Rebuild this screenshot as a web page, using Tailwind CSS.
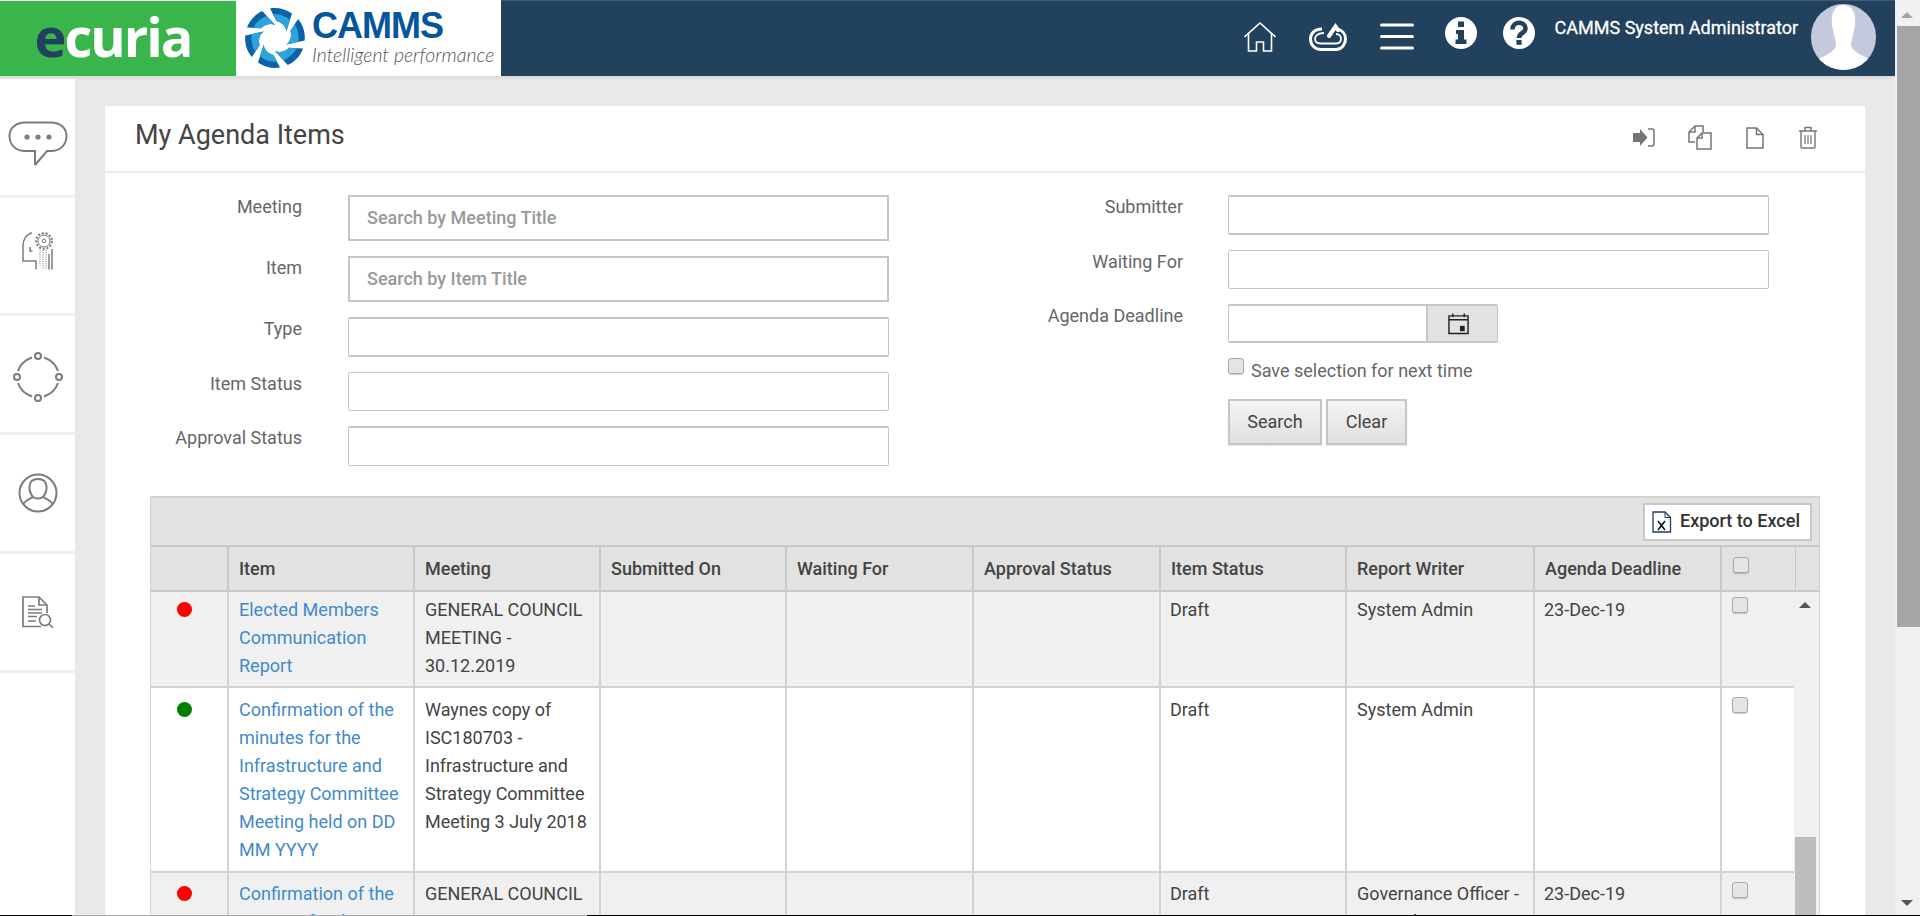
<!DOCTYPE html>
<html>
<head>
<meta charset="utf-8">
<title>My Agenda Items</title>
<script src="https://cdn.jsdelivr.net/npm/@tailwindcss/browser@4"></script>
</head>
<body class="relative h-[916px] w-[1920px] overflow-hidden bg-[#e9e9e9] font-['Roboto',sans-serif] text-[18px] text-[#555]">
<div class="flex h-[916px]">
  <div class="flex w-[1895px] flex-col">
    <!-- Header -->
    <header class="flex h-[76px] shrink-0 items-stretch bg-[#22415c] shadow-[0_2px_4px_rgba(0,0,0,0.08)]">
      <div class="flex h-[76px] w-[236px] items-center justify-center border-t border-white bg-[#3ab54c] pr-[10px] pb-[6px]">
        <span class="font-['Open_Sans',sans-serif] text-[54px] leading-none font-bold tracking-[-2px] text-white"><span class="text-[#22415c]">e</span>curia</span>
      </div>
      <div class="flex w-[265px] items-center bg-white pl-[8px]">
        <svg width="62" height="62" viewBox="-31 -31 62 62" class="shrink-0">
          <g><path fill="#0c62a6" d="M-5 -29.500 C2 -31 11 -29 17 -24.500 L11.300 -6.500 C11 -11 8 -15 1.500 -17 Z"/><path fill="#2ea3dc" d="M-2 -24 C6 -24 12 -21 15 -18 L11.300 -6.500 C11 -11 8 -15 1.500 -17 Z"/></g>
          <g transform="rotate(60)"><path fill="#0c62a6" d="M-5 -29.500 C2 -31 11 -29 17 -24.500 L11.300 -6.500 C11 -11 8 -15 1.500 -17 Z"/><path fill="#2ea3dc" d="M-2 -24 C6 -24 12 -21 15 -18 L11.300 -6.500 C11 -11 8 -15 1.500 -17 Z"/></g>
          <g transform="rotate(120)"><path fill="#0c62a6" d="M-5 -29.500 C2 -31 11 -29 17 -24.500 L11.300 -6.500 C11 -11 8 -15 1.500 -17 Z"/><path fill="#2ea3dc" d="M-2 -24 C6 -24 12 -21 15 -18 L11.300 -6.500 C11 -11 8 -15 1.500 -17 Z"/></g>
          <g transform="rotate(180)"><path fill="#0c62a6" d="M-5 -29.500 C2 -31 11 -29 17 -24.500 L11.300 -6.500 C11 -11 8 -15 1.500 -17 Z"/><path fill="#2ea3dc" d="M-2 -24 C6 -24 12 -21 15 -18 L11.300 -6.500 C11 -11 8 -15 1.500 -17 Z"/></g>
          <g transform="rotate(240)"><path fill="#0c62a6" d="M-5 -29.500 C2 -31 11 -29 17 -24.500 L11.300 -6.500 C11 -11 8 -15 1.500 -17 Z"/><path fill="#2ea3dc" d="M-2 -24 C6 -24 12 -21 15 -18 L11.300 -6.500 C11 -11 8 -15 1.500 -17 Z"/></g>
          <g transform="rotate(300)"><path fill="#0c62a6" d="M-5 -29.500 C2 -31 11 -29 17 -24.500 L11.300 -6.500 C11 -11 8 -15 1.500 -17 Z"/><path fill="#2ea3dc" d="M-2 -24 C6 -24 12 -21 15 -18 L11.300 -6.500 C11 -11 8 -15 1.500 -17 Z"/></g>
        </svg>
        <div class="ml-[6px] flex flex-col">
          <span class="font-['Liberation_Sans',sans-serif] text-[36px] leading-[30px] font-bold tracking-[-1px] text-[#04559c]">CAMMS</span>
          <span class="mt-[4px] font-['Lato',sans-serif] text-[19.5px] leading-[20px] font-light whitespace-nowrap text-[#555] italic">Intelligent performance</span>
        </div>
      </div>
      <div class="flex flex-1 items-start justify-end border-t border-[#3f5a72]">
        <div class="flex items-start">
          <svg width="32" height="30" viewBox="0 0 32 30" fill="none" stroke="white" stroke-width="1.600" class="mt-[21px] mr-[33px]"><path d="M0.500 15 L16 1 L31.500 15"/><path d="M4.500 12 V29 H12.500 V20 H19.500 V29 H27.500 V12"/></svg>
          <svg width="38" height="28" viewBox="0 0 38 28" fill="none" stroke="white" class="mt-[22px] mr-[33px]"><path stroke-width="3" d="M13 6 C5 6 1.500 11 1.500 16 C1.500 22 6 26.500 12 26.500 H27 C33 26.500 36.500 21 36.500 16 C36.500 10.500 33 7 28.500 6.500"/><path stroke-width="1.800" d="M15 10 C9 10 6 12.500 6 16 C6 19.500 9 20.500 12 20.500 H27 C30 20.500 32 18.500 32 15.500 C32 13 30 11 27 11"/><path stroke-width="4" stroke-linecap="round" d="M20 13 L26.500 3.500 L29 7"/></svg>
          <svg width="34" height="27" viewBox="0 0 34 27" fill="none" stroke="white" stroke-width="3.200" stroke-linecap="round" class="mt-[22px] mr-[31px]"><path d="M1.600 2 H32.400 M1.600 13.500 H32.400 M1.600 25 H32.400"/></svg>
          <svg width="32" height="32" viewBox="0 0 32 32" class="mt-[16px] mr-[26px]"><circle cx="16" cy="16" r="16" fill="white"/><path fill="#22415c" d="M13 4.500 H19 V10 H13 Z M11 13 H19 V22.500 H21.500 V27 H10.500 V22.500 H13 V17 H11 Z"/></svg>
          <svg width="32" height="32" viewBox="0 0 32 32" class="mt-[16px] mr-[20px]"><circle cx="16" cy="16" r="16" fill="white"/><path fill="none" stroke="#22415c" stroke-width="4.600" d="M9.500 12.500 C9.500 3.500 22.500 4 22.500 11.500 C22.500 16 16 16 16 21"/><rect x="13.400" y="23" width="5.200" height="4.800" fill="#22415c"/></svg>
        </div>
        <span class="mt-[16px] mr-[13px] text-[18px] leading-[22px] font-normal whitespace-nowrap text-white [-webkit-text-stroke:0.3px_white]">CAMMS System Administrator</span>
        <div class="mt-[3px] mr-[19px] h-[66px] w-[65px] shrink-0 overflow-hidden rounded-full bg-[#c4c9de]">
          <svg viewBox="0 0 65 66" class="h-full w-full"><path fill="white" d="M32 1 C42 1 45 10 44 20 C43 30 40 35 40 42 C43 49 54 52 62 58 C52 65 43 66 32 66 C22 66 12 65 3 58 C11 52 23 49 25 42 C25 35 22 30 21 20 C20 10 23 1 32 1 Z"/></svg>
        </div>
      </div>
    </header>
    <div class="flex min-h-0 flex-1 pt-[3px]">
      <!-- Sidebar -->
      <aside class="flex w-[75px] shrink-0 flex-col bg-white">
        <div class="flex h-[119px] items-center justify-center border-b-[3px] border-[#eef1f0] pt-[14px]">
          <svg width="60" height="46" viewBox="0 0 60 46" fill="none" stroke="#7c7c7c" stroke-width="2"><path d="M17 1.500 H43 C52 1.500 58.500 7 58.500 15 C58.500 24 52 30 43 30 H39 L28 43 C27 44 27 43.500 27 43 L27 30 H17 C8 30 1.500 24 1.500 15 C1.500 7 8 1.500 17 1.500 Z"/><circle cx="19" cy="16" r="2.600" fill="#7c7c7c" stroke="none"/><circle cx="30" cy="16" r="2.600" fill="#7c7c7c" stroke="none"/><circle cx="41" cy="16" r="2.600" fill="#7c7c7c" stroke="none"/></svg>
        </div>
        <div class="flex h-[118px] items-center justify-center border-b-[3px] border-[#eef1f0] pb-[9px]">
          <svg width="31" height="38" viewBox="0 0 31 38" fill="none" stroke="#7c7c7c" stroke-width="1.500"><path d="M10 1 C4 2 1 8 1 14 V29 H14 V37.500"/><path d="M8 15 V19 H10.500"/><circle cx="22" cy="9" r="7.800" stroke-width="2" stroke-dasharray="2.200 1.600"/><circle cx="22" cy="9" r="6" stroke-width="1"/><circle cx="22" cy="9" r="1.800" stroke-width="1"/><path d="M18 18 V34 M21 18 V37.500 M24 18 V37.500" stroke-dasharray="1 1.200" stroke-width="1"/><path d="M27 22 V37.500 M30 17 V37.500"/></svg>
        </div>
        <div class="flex h-[119px] items-center justify-center border-b-[3px] border-[#eef1f0] pt-[6px]">
          <svg width="50" height="50" viewBox="0 0 50 50" fill="none" stroke="#7c7c7c" stroke-width="2"><circle cx="25" cy="4" r="3"/><circle cx="4" cy="25" r="3"/><circle cx="46" cy="25" r="3"/><circle cx="25" cy="46" r="3"/><path d="M19 5.500 C12 8 7 13 5 19 M31 5.500 C38 8 43 13 45 19 M5 31 C7 37 12 42 19 44.500 M45 31 C43 37 38 42 31 44.500"/></svg>
        </div>
        <div class="flex h-[119px] items-center justify-center border-b-[3px] border-[#eef1f0]">
          <svg width="40" height="40" viewBox="0 0 40 40" fill="none" stroke="#7c7c7c" stroke-width="2"><circle cx="20" cy="20" r="18.500"/><path d="M5 31 C8 27 11 26 15 24 C12 20 11 17 11.500 13 C12 8 15.500 6 20 6 C24.500 6 28 8 28.500 13 C29 17 28 20 25 24 C29 26 32 27 35 31"/><path d="M15 24 C17.500 26 22.500 26 25 24"/></svg>
        </div>
        <div class="flex h-[119px] items-center justify-center border-b-[3px] border-[#eef1f0]">
          <svg width="32" height="32" viewBox="0 0 32 32" fill="none" stroke="#7c7c7c" stroke-width="1.700"><path d="M19 30.500 H1 V1 H17 L25 9 V17"/><path d="M17 1 V9 H25"/><path d="M6 10 H13 M6 13.500 H20 M6 17 H20 M6 20.500 H15 M6 25 H14"/><circle cx="23" cy="24" r="5.500" fill="white"/><path d="M27 28 L31 32"/></svg>
        </div>
      </aside>
      <!-- Main -->
      <main class="min-w-0 flex-1 pt-[27px] pl-[30px]">
        <div class="h-full w-[1760px] bg-white">
          <div class="flex h-[67px] items-center justify-between border-b-[2px] border-[#ececec] pr-[47px] pl-[30px]">
            <h1 class="mt-[-8px] text-[27px] leading-[30px] font-normal text-[#444]">My Agenda Items</h1>
            <div class="mb-[2px] flex items-center">
              <svg width="22" height="19" viewBox="0 0 22 19" class="mr-[33px]"><path fill="#757575" d="M0 5 H7 V1 L14.500 9.500 L7 18 V14 H0 Z"/><path fill="none" stroke="#757575" stroke-width="1.500" d="M15 1 H19 Q21 1 21 3.500 V15.500 Q21 18 19 18 H15"/></svg>
              <svg width="24" height="25" viewBox="0 0 24 25" fill="none" stroke="#757575" stroke-width="1.500" class="mr-[34px]"><path d="M7 17 H1 V7 L7 1 H15 V7"/><path d="M1 7 H7 V1"/><path d="M23 24 H9 V13 L14 8 H23 Z"/><path d="M9 13 H14 V8"/></svg>
              <svg width="18" height="22" viewBox="0 0 18 22" fill="none" stroke="#757575" stroke-width="1.500" class="mr-[34px]"><path d="M1 1 H10.500 L17 7.500 V21 H1 Z"/><path d="M10.500 1 V7.500 H17"/></svg>
              <svg width="20" height="23" viewBox="0 0 20 23" fill="none" stroke="#757575" stroke-width="1.400"><path d="M1 5 H19 M7 5 V1.500 H13 V5 M3 5 V21 Q3 22 4 22 H16 Q17 22 17 21 V5"/><path d="M7 9 V18 M10 9 V18 M13 9 V18" stroke-width="1.200"/></svg>
            </div>
          </div>
          <!-- Search form -->
          <div class="flex h-[323px] items-start pt-[22px]">
            <div class="flex w-[784px] flex-col">
              <div class="flex h-[61px] items-start"><label class="w-[197px] text-right leading-[24px] text-[#666]">Meeting</label><input placeholder="Search by Meeting Title" class="ml-[46px] h-[46px] w-[541px] border-[2px] border-[#c6c6c6] bg-white px-[17px] pb-[1px] text-[18px] font-medium placeholder:text-[#999]"></div>
              <div class="flex h-[61px] items-start"><label class="w-[197px] text-right leading-[24px] text-[#666]">Item</label><input placeholder="Search by Item Title" class="ml-[46px] h-[46px] w-[541px] border-[2px] border-[#c6c6c6] bg-white px-[17px] pb-[1px] text-[18px] font-medium placeholder:text-[#999]"></div>
              <div class="flex h-[55px] items-start"><label class="w-[197px] text-right leading-[24px] text-[#666]">Type</label><div class="ml-[46px] h-[40px] w-[541px] rounded-[2px] border border-t-[2px] border-b-[2px] border-[#c6c6c6] bg-white"></div></div>
              <div class="flex h-[54px] items-start"><label class="w-[197px] text-right leading-[24px] text-[#666]">Item Status</label><div class="ml-[46px] h-[39px] w-[541px] rounded-[2px] border border-[#c6c6c6] bg-white"></div></div>
              <div class="flex h-[40px] items-start"><label class="w-[197px] text-right leading-[24px] text-[#666]">Approval Status</label><div class="ml-[46px] h-[40px] w-[541px] rounded-[2px] border border-t-[2px] border-[#c6c6c6] bg-white"></div></div>
            </div>
            <div class="flex flex-1 flex-col">
              <div class="flex h-[55px] items-start"><label class="w-[294px] text-right leading-[24px] text-[#666]">Submitter</label><div class="ml-[45px] h-[40px] w-[541px] rounded-[2px] border border-t-[2px] border-b-[2px] border-[#c6c6c6] bg-white"></div></div>
              <div class="flex h-[54px] items-start"><label class="w-[294px] text-right leading-[24px] text-[#666]">Waiting For</label><div class="ml-[45px] h-[39px] w-[541px] rounded-[2px] border border-[#c6c6c6] bg-white"></div></div>
              <div class="flex h-[54px] items-start"><label class="w-[294px] text-right leading-[24px] text-[#666]">Agenda Deadline</label>
                <div class="ml-[45px] flex h-[39px] w-[270px] rounded-[2px] border border-t-[2px] border-b-[2px] border-[#c6c6c6]">
                  <div class="w-[197px] bg-white"></div>
                  <div class="flex flex-1 items-center justify-center border-l-[2px] border-[#c6c6c6] bg-[#e2e2e2] pr-[8px]">
                    <svg width="21" height="23" viewBox="0 0 22 23" fill="none" stroke="#222" stroke-width="1.500"><path d="M1 3.500 H21 V22 H1 Z M1 7.500 H21"/><path d="M5 1 V5 M17 1 V5"/><rect x="12.500" y="14" width="5" height="5.500" fill="#222" stroke="none"/></svg>
                  </div>
                </div>
              </div>
              <div class="flex items-start pl-[339px]">
                <span class="h-[16px] w-[16px] rounded-[3px] border border-[#aaa] bg-[#e4e4e4] shadow-[0_1px_1px_rgba(0,0,0,0.2)]"></span>
                <span class="ml-[7px] leading-[26px] text-[#666]">Save selection for next time</span>
              </div>
              <div class="mt-[15px] flex pl-[339px]">
                <button class="h-[46px] w-[94px] border-[2px] border-[#c6c6c6] bg-linear-to-b from-[#f4f4f4] to-[#e0e0e0] pb-[2px] text-[18px] font-normal text-[#444] shadow-[0_1px_1px_rgba(0,0,0,0.1)]">Search</button>
                <button class="ml-[4px] h-[46px] w-[81px] border-[2px] border-[#c6c6c6] bg-linear-to-b from-[#f4f4f4] to-[#e0e0e0] pb-[2px] text-[18px] font-normal text-[#444] shadow-[0_1px_1px_rgba(0,0,0,0.1)]">Clear</button>
              </div>
            </div>
          </div>
          <!-- Table -->
          <div class="ml-[45px] w-[1670px] border-x-[1px] border-t-[2px] border-[#d2d2d2] leading-[28px]">
            <div class="flex h-[49px] items-center justify-end border-b-[2px] border-[#c8c8c8] bg-[#e2e2e2] pr-[7px]">
              <div class="flex h-[38px] w-[169px] items-center border-[2px] border-[#c8c8c8] bg-white pl-[7px]">
                <svg width="20" height="22" viewBox="0 0 20 22" fill="none" class="shrink-0"><path d="M1 1 H13 L18.500 6.500 V21 H1 Z" stroke="#1f3a66" stroke-width="1.300"/><path d="M13 1 V6.500 H18.500" stroke="#1f3a66" stroke-width="1"/><path d="M6 10 L13 19 M13 10 L6 19" stroke="#111" stroke-width="1.600"/></svg>
                <span class="ml-[8px] pb-[2px] text-[18px] font-medium whitespace-nowrap text-[#333]">Export to Excel</span>
              </div>
            </div>
            <div class="grid h-[45px] grid-cols-[76px_186px_186px_186px_187px_187px_186px_188px_187px_75px_1fr] border-b-[2px] border-[#c8c8c8] bg-[#e2e2e2] font-medium text-[#444]">
              <div></div>
              <div class="border-l-[2px] border-[#c8c8c8] pt-[8px] pl-[10px]">Item</div>
              <div class="border-l-[2px] border-[#c8c8c8] pt-[8px] pl-[10px]">Meeting</div>
              <div class="border-l-[2px] border-[#c8c8c8] pt-[8px] pl-[10px]">Submitted On</div>
              <div class="border-l-[2px] border-[#c8c8c8] pt-[8px] pl-[10px]">Waiting For</div>
              <div class="border-l-[2px] border-[#c8c8c8] pt-[8px] pl-[10px]">Approval Status</div>
              <div class="border-l-[2px] border-[#c8c8c8] pt-[8px] pl-[10px]">Item Status</div>
              <div class="border-l-[2px] border-[#c8c8c8] pt-[8px] pl-[10px]">Report Writer</div>
              <div class="border-l-[2px] border-[#c8c8c8] pt-[8px] pl-[10px]">Agenda Deadline</div>
              <div class="border-l-[2px] border-[#c8c8c8] pt-[10px] pl-[11px]"><span class="block h-[16px] w-[16px] rounded-[3px] border border-[#aaa] bg-[#e4e4e4] shadow-[0_1px_1px_rgba(0,0,0,0.2)]"></span></div>
              <div class="border-l border-[#c8c8c8]"></div>
            </div>
            <div class="flex h-[326px] overflow-hidden">
              <div class="w-[1643px] shrink-0 text-[#444]">
                <div class="grid h-[96px] grid-cols-[76px_186px_186px_186px_187px_187px_186px_188px_187px_1fr] border-b-[2px] border-[#d2d2d2] bg-[#f0f0f0]">
                  <div class="pt-[10px] pl-[26px]"><span class="block h-[15px] w-[15px] rounded-full bg-[#fe0000]"></span></div>
                  <div class="border-l-[2px] border-[#d2d2d2] pt-[4px] pr-[8px] pl-[10px] text-[#428bca]">Elected Members Communication Report</div>
                  <div class="border-l-[2px] border-[#d2d2d2] pt-[4px] pr-[8px] pl-[10px]">GENERAL COUNCIL MEETING - 30.12.2019</div>
                  <div class="border-l-[2px] border-[#d2d2d2]"></div>
                  <div class="border-l-[2px] border-[#d2d2d2]"></div>
                  <div class="border-l-[2px] border-[#d2d2d2]"></div>
                  <div class="border-l-[2px] border-[#d2d2d2] pt-[4px] pl-[9px]">Draft</div>
                  <div class="border-l-[2px] border-[#d2d2d2] pt-[4px] pl-[10px]">System Admin</div>
                  <div class="border-l-[2px] border-[#d2d2d2] pt-[4px] pl-[9px]">23-Dec-19</div>
                  <div class="border-l-[2px] border-[#d2d2d2] pt-[5px] pl-[10px]"><span class="block h-[16px] w-[16px] rounded-[3px] border border-[#aaa] bg-[#e4e4e4] shadow-[0_1px_1px_rgba(0,0,0,0.2)]"></span></div>
                </div>
                <div class="grid h-[185px] grid-cols-[76px_186px_186px_186px_187px_187px_186px_188px_187px_1fr] border-b-[2px] border-[#d2d2d2] bg-white">
                  <div class="pt-[14px] pl-[26px]"><span class="block h-[15px] w-[15px] rounded-full bg-[#008000]"></span></div>
                  <div class="border-l-[2px] border-[#d2d2d2] pt-[8px] pr-[8px] pl-[10px] text-[#428bca]">Confirmation of the minutes for the Infrastructure and Strategy Committee Meeting held on DD MM YYYY</div>
                  <div class="border-l-[2px] border-[#d2d2d2] pt-[8px] pr-[8px] pl-[10px]">Waynes copy of ISC180703 - Infrastructure and Strategy Committee Meeting 3 July 2018</div>
                  <div class="border-l-[2px] border-[#d2d2d2]"></div>
                  <div class="border-l-[2px] border-[#d2d2d2]"></div>
                  <div class="border-l-[2px] border-[#d2d2d2]"></div>
                  <div class="border-l-[2px] border-[#d2d2d2] pt-[8px] pl-[9px]">Draft</div>
                  <div class="border-l-[2px] border-[#d2d2d2] pt-[8px] pl-[10px]">System Admin</div>
                  <div class="border-l-[2px] border-[#d2d2d2]"></div>
                  <div class="border-l-[2px] border-[#d2d2d2] pt-[9px] pl-[10px]"><span class="block h-[16px] w-[16px] rounded-[3px] border border-[#aaa] bg-[#e4e4e4] shadow-[0_1px_1px_rgba(0,0,0,0.2)]"></span></div>
                </div>
                <div class="grid h-[96px] grid-cols-[76px_186px_186px_186px_187px_187px_186px_188px_187px_1fr] bg-[#f0f0f0]">
                  <div class="pt-[13px] pl-[26px]"><span class="block h-[15px] w-[15px] rounded-full bg-[#fe0000]"></span></div>
                  <div class="border-l-[2px] border-[#d2d2d2] pt-[7px] pr-[8px] pl-[10px] text-[#428bca]">Confirmation of the minutes for the</div>
                  <div class="border-l-[2px] border-[#d2d2d2] pt-[7px] pr-[8px] pl-[10px]">GENERAL COUNCIL MEETING</div>
                  <div class="border-l-[2px] border-[#d2d2d2]"></div>
                  <div class="border-l-[2px] border-[#d2d2d2]"></div>
                  <div class="border-l-[2px] border-[#d2d2d2]"></div>
                  <div class="border-l-[2px] border-[#d2d2d2] pt-[7px] pl-[9px]">Draft</div>
                  <div class="border-l-[2px] border-[#d2d2d2] pt-[7px] pr-[8px] pl-[10px]">Governance Officer - Internal</div>
                  <div class="border-l-[2px] border-[#d2d2d2] pt-[7px] pl-[9px]">23-Dec-19</div>
                  <div class="border-l-[2px] border-[#d2d2d2] pt-[9px] pl-[10px]"><span class="block h-[16px] w-[16px] rounded-[3px] border border-[#aaa] bg-[#e4e4e4] shadow-[0_1px_1px_rgba(0,0,0,0.2)]"></span></div>
                </div>
              </div>
              <div class="relative flex-1 bg-[#f0f0f0]">
                <span class="absolute top-[10px] left-[5px] h-0 w-0 border-x-[6px] border-b-[6px] border-x-transparent border-b-[#555]"></span>
                <span class="absolute top-[245px] left-[1px] h-[90px] w-[21px] bg-[#bdbdbd]"></span>
              </div>
            </div>
          </div>
        </div>
      </main>
    </div>
  </div>
  <!-- Page scrollbar -->
  <div class="relative w-[25px] shrink-0 bg-[#f0f0f0]">
    <span class="absolute top-[12px] left-[6px] h-0 w-0 border-x-[6px] border-b-[6px] border-x-transparent border-b-[#a3a3a3]"></span>
    <span class="absolute top-[26px] left-[2px] h-[601px] w-[23px] bg-[#a6a6a6]"></span>
    <span class="absolute top-[900px] left-[6px] h-0 w-0 border-x-[6px] border-t-[6px] border-x-transparent border-t-[#555]"></span>
  </div>
</div>
<!-- Bottom window edge -->
<div class="absolute bottom-0 left-0 flex h-px w-full">
  <div class="w-[72px] bg-black"></div>
  <div class="w-[515px] bg-[#aaa]"></div>
  <div class="flex-1 bg-black"></div>
</div>
</body>
</html>
